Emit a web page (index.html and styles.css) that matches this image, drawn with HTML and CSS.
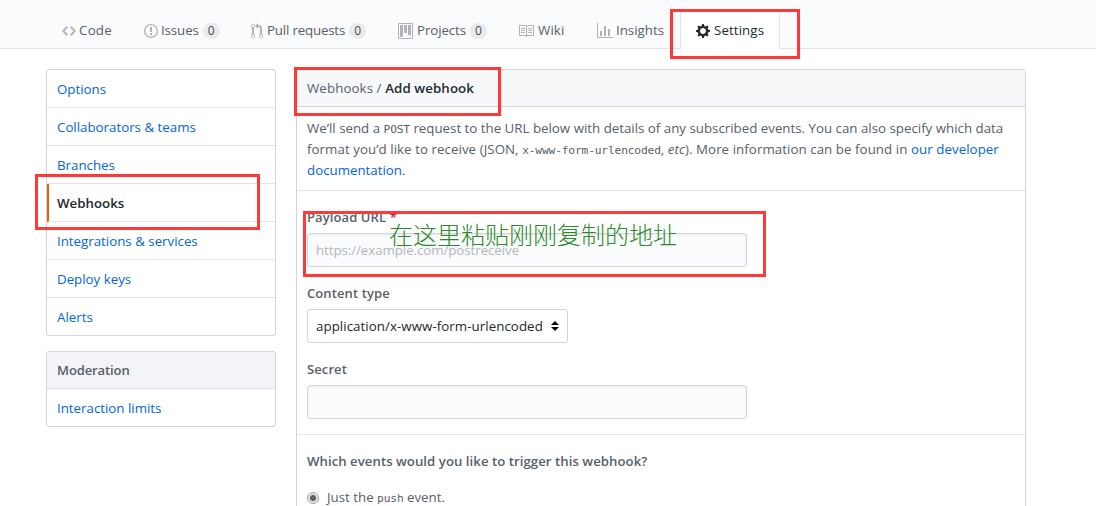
FILE: index.html
```html
<!DOCTYPE html>
<html lang="en">
<head>
<meta charset="utf-8">
<title>Add webhook</title>
<link rel="stylesheet" href="styles.css">
</head>
<body>
<header class="repo-head">
  <nav class="tabs">
    <a class="tab tab-code"><svg class="icon" width="14" height="16" viewBox="0 0 14 16"><path d="M9.5 3L8 4.5 11.5 8 8 11.5 9.5 13 14 8 9.5 3zm-5 0L0 8l4.5 5L6 11.5 2.5 8 6 4.5 4.5 3z"/></svg><span class="tab-label">Code</span></a>
    <a class="tab tab-issues"><svg class="icon" width="14" height="16" viewBox="0 0 14 16"><path d="M7 2.3c3.14 0 5.7 2.56 5.7 5.7s-2.56 5.7-5.7 5.7A5.71 5.71 0 0 1 1.3 8c0-3.14 2.56-5.7 5.7-5.7zM7 1C3.14 1 0 4.14 0 8s3.14 7 7 7 7-3.14 7-7-3.14-7-7-7zm1 3H6v5h2V4zm0 6H6v2h2v-2z"/></svg><span class="tab-label">Issues</span><span class="counter">0</span></a>
    <a class="tab tab-pulls"><svg class="icon" width="12" height="16" viewBox="0 0 12 16"><path d="M11 11.28V5c-.03-.78-.34-1.47-.94-2.06C9.46 2.35 8.78 2.03 8 2H7V0L4 3l3 3V4h1c.27.02.48.11.69.31.21.2.3.42.31.69v6.28A1.993 1.993 0 0 0 10 15a1.993 1.993 0 0 0 1-3.72zm-1 2.92c-.66 0-1.2-.55-1.2-1.2 0-.65.55-1.2 1.2-1.2.65 0 1.2.55 1.2 1.2 0 .65-.55 1.2-1.2 1.2zM4 3c0-1.11-.89-2-2-2a1.993 1.993 0 0 0-1 3.72v6.56A1.993 1.993 0 0 0 2 15a1.993 1.993 0 0 0 1-3.72V4.72c.59-.34 1-.98 1-1.72zm-.8 10c0 .66-.55 1.2-1.2 1.2-.65 0-1.2-.55-1.2-1.2 0-.65.55-1.2 1.2-1.2.65 0 1.2.55 1.2 1.2zM2 4.2C1.34 4.2.8 3.65.8 3c0-.65.55-1.2 1.2-1.2.65 0 1.2.55 1.2 1.2 0 .65-.55 1.2-1.2 1.2z"/></svg><span class="tab-label">Pull requests</span><span class="counter">0</span></a>
    <a class="tab tab-projects"><svg class="icon" width="15" height="16" viewBox="0 0 15 16"><path fill-rule="evenodd" d="M10 12h3V2h-3v10zm-4-2h3V2H6v8zm-4 4h3V2H2v12zm-1 1h13V1H1v14zM14 0H1a1 1 0 0 0-1 1v14a1 1 0 0 0 1 1h13a1 1 0 0 0 1-1V1a1 1 0 0 0-1-1z"/></svg><span class="tab-label">Projects</span><span class="counter">0</span></a>
    <a class="tab tab-wiki"><svg class="icon" width="16" height="16" viewBox="0 0 16 16"><path d="M3 5h4v1H3V5zm0 3h4V7H3v1zm0 2h4V9H3v1zm11-5h-4v1h4V5zm0 2h-4v1h4V7zm0 2h-4v1h4V9zm2-6v9c0 .55-.45 1-1 1H9.5l-1 1-1-1H2c-.55 0-1-.45-1-1V3c0-.55.45-1 1-1h5.5l1 1 1-1H15c.55 0 1 .45 1 1zm-8 .5L7.5 3H2v9h6V3.5zm7-.5H9.5l-.5.5V12h6V3z"/></svg><span class="tab-label">Wiki</span></a>
    <a class="tab tab-insights"><svg class="icon" width="16" height="16" viewBox="0 0 16 16"><path d="M16 14v1H0V0h1v14h15zM5 13H3V8h2v5zm4 0H7V3h2v10zm4 0h-2V6h2v7z"/></svg><span class="tab-label">Insights</span></a>
    <a class="tab tab-settings selected"><svg class="icon" width="14" height="16" viewBox="0 0 14 16"><path d="M14 8.77v-1.6l-1.94-.64-.45-1.09.88-1.84-1.13-1.13-1.81.91-1.09-.45-.69-1.92h-1.6l-.63 1.94-1.11.45-1.84-.88-1.13 1.13.91 1.81-.45 1.09L0 7.23v1.59l1.94.64.45 1.09-.88 1.84 1.13 1.13 1.81-.91 1.09.45.69 1.92h1.59l.63-1.94 1.11-.45 1.84.88 1.13-1.13-.92-1.81.47-1.09L14 8.75v.02zM7 11c-1.66 0-3-1.34-3-3s1.34-3 3-3 3 1.34 3 3-1.34 3-3 3z"/></svg><span class="tab-label">Settings</span></a>
  </nav>
</header>
<main class="layout">
  <aside class="sidebar">
    <nav class="menu">
      <a class="menu-item">Options</a>
      <a class="menu-item">Collaborators &amp; teams</a>
      <a class="menu-item">Branches</a>
      <a class="menu-item current">Webhooks</a>
      <a class="menu-item">Integrations &amp; services</a>
      <a class="menu-item">Deploy keys</a>
      <a class="menu-item">Alerts</a>
    </nav>
    <nav class="menu">
      <h2 class="menu-heading">Moderation</h2>
      <a class="menu-item">Interaction limits</a>
    </nav>
  </aside>
  <section class="panel">
    <h1 class="panel-head"><span>Webhooks / </span><strong>Add webhook</strong></h1>
    <p class="intro"><span class="line">We’ll send a <code>POST</code> request to the URL below with details of any subscribed events. You can also specify which data</span> <span class="line line-format">format you’d like to receive (JSON, <code>x-www-form-urlencoded</code>, <em>etc</em>). More information can be found in <a>our developer</a></span> <span class="line"><a>documentation</a>.</span></p>
    <form class="fields">
      <label class="field-label" for="url">Payload URL <span class="required">*</span></label>
      <input class="text-input" id="url" placeholder="https://example.com/postreceive">
      <label class="field-label">Content type</label>
      <div class="select"><span>application/x-www-form-urlencoded</span><svg width="8" height="10" viewBox="0 0 8 10"><path d="M0 4L4 0l4 4zM0 6h8L4 10z"/></svg></div>
      <label class="field-label" for="secret">Secret</label>
      <input class="text-input" id="secret">
    </form>
    <div class="events">
      <h3 class="events-title">Which events would you like to trigger this webhook?</h3>
      <label class="choice"><span class="radio"></span><span>Just the <code>push</code> event.</span></label>
    </div>
  </section>
</main>
<div class="mark mark-settings"></div>
<div class="mark mark-title"></div>
<div class="mark mark-menu"></div>
<div class="mark mark-url"></div>
<div class="note" lang="zh">在这里粘贴刚刚复制的地址</div>
</body>
</html>
```
FILE: styles.css
```css
* { box-sizing: border-box; }
body {
  margin: 0;
  height: 506px;
  overflow: hidden;
  position: relative;
  background: #fff;
  color: #586069;
  font: 13.3px/21px "Open Sans", "Noto Sans", sans-serif;
}
a { color: #0366d6; }
code { font: 11.3px/1 "DejaVu Sans Mono", monospace; letter-spacing: -0.2px; }
.repo-head {
  height: 49px;
  padding: 12px 0 0 46px;
  background: #fafbfc;
  border-bottom: 1px solid #e1e4e8;
}
.tabs { display: flex; }
.tab {
  display: flex;
  align-items: center;
  height: 37px;
  padding-left: 16px;
  color: #586069;
  white-space: nowrap;
}
.icon { flex: none; margin-right: 3px; fill: currentColor; opacity: .45; }
.tab-code { width: 82px; letter-spacing: .25px; }
.tab-issues { width: 107px; letter-spacing: -.1px; }
.tab-pulls { width: 147px; letter-spacing: -.18px; }
.tab-pulls .icon { margin-right: 4px; }
.tab-projects { width: 121px; letter-spacing: -.1px; }
.tab-projects .icon { margin-right: 4px; }
.tab-wiki { width: 78px; padding-left: 15px; letter-spacing: .1px; }
.tab-wiki .icon { margin-right: 4px; }
.tab-insights { width: 99px; }
.tab-settings { width: 100px; }
.tab-settings .icon { margin-right: 4px; opacity: 1; }
.selected {
  padding-left: 15px;
  color: #24292e;
  background: #fff;
  border: solid #e1e4e8;
  border-width: 0 1px;
  letter-spacing: .1px;
}
.counter {
  width: 17px;
  height: 16px;
  margin-left: 4px;
  border-radius: 8px;
  background: #e9eaec;
  color: #444d56;
  font-size: 12px;
  font-weight: 500;
  line-height: 16px;
  letter-spacing: 0;
  text-align: center;
}
.layout { display: flex; gap: 20px; padding: 20px 0 0 46px; }
.sidebar { width: 230px; flex: none; }
.menu { margin-bottom: 15px; border: 1px solid #d1d5da; border-radius: 3px; }
.menu-item {
  display: block;
  height: 38px;
  padding: 9px 10px 0;
  border-bottom: 1px solid #e1e4e8;
}
.menu-item:last-child { height: 37px; border-bottom: 0; }
.current {
  padding-left: 8px;
  border-left: 2px solid #e36209;
  color: #24292e;
  font-weight: 600;
}
.menu-heading {
  height: 37px;
  margin: 0;
  padding: 8px 10px;
  border-bottom: 1px solid #e1e4e8;
  background: #f3f4f8;
  font-size: 13px;
  font-weight: 600;
  line-height: 21px;
  letter-spacing: -.4px;
}
.menu-heading { letter-spacing: -.1px; }
.panel {
  width: 730px;
  height: 460px;
  flex: none;
  border: 1px solid #d1d5da;
  border-radius: 3px;
}
.panel-head {
  height: 37px;
  margin: 0;
  padding: 8px 10px;
  border-bottom: 1px solid #d1d5da;
  background: #f6f8fa;
  font-size: 13.3px;
  font-weight: 400;
  line-height: 21px;
  letter-spacing: .09px;
}
.panel-head span { white-space: pre; }
.panel-head strong { color: #24292e; font-weight: 600; }
.intro {
  height: 84px;
  margin: 0;
  padding: 11px 10px 0;
  border-bottom: 1px solid #e1e4e8;
}
.line { display: block; white-space: nowrap; }
.line-format { letter-spacing: .06px; }
.fields {
  display: flex;
  flex-direction: column;
  align-items: flex-start;
  height: 244px;
  padding: 16px 10px 0;
  border-bottom: 1px solid #e1e4e8;
}
.field-label { flex: none; height: 26px; font-size: 13px; font-weight: 600; letter-spacing: .1px; }
.required { color: #cb2431; }
.text-input, .select {
  flex: none;
  height: 34px;
  margin-bottom: 16px;
  padding: 0 8px;
  border: 1px solid #d1d5da;
  border-radius: 3px;
  font: inherit;
}
.text-input {
  width: 440px;
  background: #fafbfc;
  box-shadow: inset 0 1px 2px rgba(27, 31, 35, .075);
  letter-spacing: -.06px;
}
.text-input::placeholder { color: #b3b7bc; }
.select {
  display: flex;
  align-items: center;
  justify-content: space-between;
  width: 261px;
  color: #24292e;
  white-space: nowrap;
  letter-spacing: .06px;
}
.events { padding: 16px 10px 0; }
.events-title {
  margin: 0;
  font-size: 13.2px;
  font-weight: 600;
  line-height: 21px;
  letter-spacing: .04px;
}
.choice { display: flex; align-items: center; gap: 8px; margin-top: 15px; }
.radio {
  width: 12px;
  height: 12px;
  border: 1px solid #a6a6a6;
  border-radius: 50%;
  background: radial-gradient(circle, #606060 0 2.5px, #e2e2e2 3.6px);
}
/* Tutorial annotations drawn over the page */
.mark { position: absolute; border: 3px solid #ff3838; }
.mark-settings { left: 670px; top: 9px; width: 130px; height: 50px; }
.mark-title { left: 294px; top: 67px; width: 207px; height: 49px; }
.mark-menu { left: 35px; top: 174px; width: 225px; height: 56px; }
.mark-url { left: 303px; top: 211px; width: 463px; height: 66px; }
.note {
  position: absolute;
  left: 389px;
  top: 217px;
  color: #2c8a2c;
  font: 300 24px/34px "Noto Sans CJK SC", sans-serif;
  white-space: nowrap;
}
```
